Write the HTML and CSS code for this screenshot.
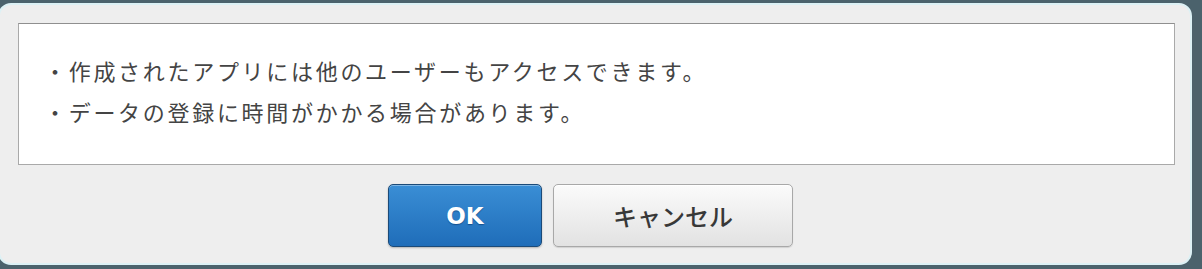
FILE: index.html
```html
<!DOCTYPE html>
<html lang="ja">
<head>
  <meta charset="UTF-8">
  <meta name="viewport" content="width=device-width, initial-scale=1.0">
  <title>確認</title>
  <link rel="stylesheet" href="styles.css">
</head>
<body>

  <div class="dialog">
    <div class="message-box">
      <p class="message-line">・作成されたアプリには他のユーザーもアクセスできます。</p>
      <p class="message-line">・データの登録に時間がかかる場合があります。</p>
    </div>
    <div class="button-row">
      <button type="button" class="btn btn-ok">OK</button>
      <button type="button" class="btn btn-cancel">キャンセル</button>
    </div>
  </div>

</body>
</html>
```

FILE: styles.css
```css
html, body { margin: 0; height: 100%; }
body { background: #4b626c; font-family: "Noto Sans CJK JP", "Noto Sans", sans-serif; overflow: hidden; }
.dialog { box-sizing: border-box; width: 1194px; height: 262px; margin: 3px 0 0 -2px; padding: 18px 15px 0 18px; background: #eeeeee; border: 2px solid #dcf1f5; border-radius: 13px; }
.message-box { box-sizing: border-box; height: 142px; padding: 26px 25px 0; background: #fff; border: 1px solid #a9a9a9; border-top-color: #8f8f8f; }
.message-line { margin: 0; font-size: 22px; line-height: 41px; color: #444; letter-spacing: 2.7px; }
.button-row { display: flex; justify-content: center; gap: 11px; margin-top: 19px; padding-right: 12px; }
.btn { box-sizing: border-box; height: 63px; border-radius: 5px; cursor: pointer; }
.btn-ok { width: 154px; background: linear-gradient(#3a8ed5, #1f6db9); border: 1px solid #1b4a78; box-shadow: inset 0 1px 0 rgba(255,255,255,0.35), 0 1px 2px rgba(0,0,0,0.25); color: #fff; font-family: "DejaVu Sans", sans-serif; font-weight: bold; font-size: 23px; text-shadow: 0 1px 1px rgba(0,40,90,0.5); }
.btn-cancel { width: 240px; background: linear-gradient(#fbfbfb, #e2e2e2); border: 1px solid #a8a8a8; box-shadow: inset 0 1px 0 #fff, 0 1px 1px rgba(0,0,0,0.12); color: #383838; font-family: "Noto Sans CJK JP", sans-serif; font-weight: 500; font-size: 24px; }
```
